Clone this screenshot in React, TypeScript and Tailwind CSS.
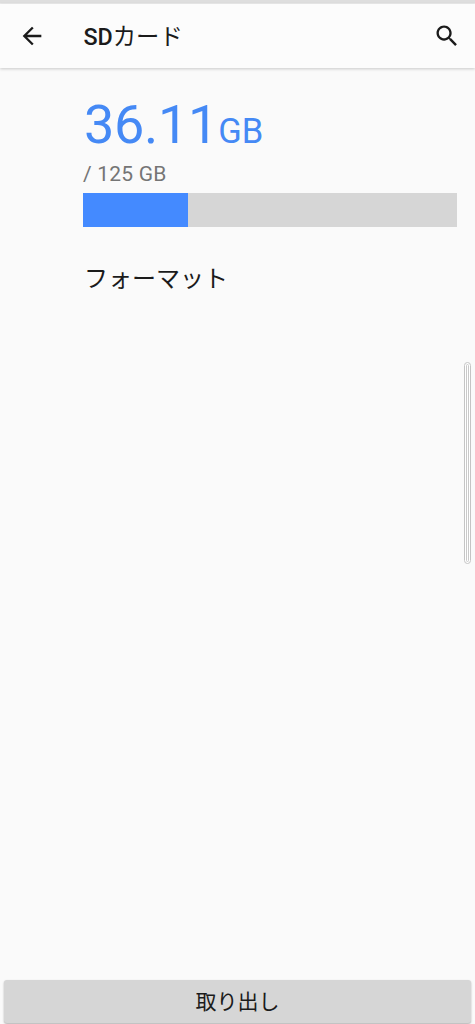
const USED_GB = 36.11;
const USED_PERCENT = 28.1;

function BackIcon() {
  return (
    <svg viewBox="0 0 24 24" className="size-[28px]" fill="currentColor" aria-hidden="true">
      <path d="M20 11H7.83l5.59-5.59L12 4l-8 8 8 8 1.41-1.41L7.83 13H20v-2z" />
    </svg>
  );
}

function SearchIcon() {
  return (
    <svg viewBox="0 0 24 24" className="size-[28px]" fill="currentColor" aria-hidden="true">
      <path d="M15.5 14h-.79l-.28-.27C15.41 12.59 16 11.11 16 9.5 16 5.91 13.09 3 9.5 3S3 5.91 3 9.5 5.91 16 9.5 16c1.61 0 3.09-.59 4.23-1.57l.27.28v.79l5 4.99L20.49 19l-4.99-5zm-6 0C7.01 14 5 11.99 5 9.5S7.01 5 9.5 5 14 7.01 14 9.5 11.99 14 9.5 14z" />
    </svg>
  );
}

export default function App() {
  return (
    <div className="relative flex h-[1024px] w-[475px] flex-col overflow-hidden bg-[#fafafa] font-['Roboto','Noto_Sans_CJK_JP',sans-serif] text-[#1b1b1b]">
      <div className="h-[4px] shrink-0 border-b border-[#ececec] bg-[#dedede]" />
      <header className="flex h-[64px] shrink-0 items-center bg-[#fcfcfc] pl-[18px] pr-[14px] shadow-[0_1px_3px_rgba(0,0,0,0.2)]">
        <button className="flex" aria-label="戻る">
          <BackIcon />
        </button>
        <h1 className="ml-[37.5px] flex-1 pt-[2px] text-[23.3px] leading-[30px] font-medium">
          SD<span className="font-normal">カード</span>
        </h1>
        <button className="flex" aria-label="検索">
          <SearchIcon />
        </button>
      </header>

      <main className="flex flex-1 flex-col pl-[83px] pr-[18px] pt-[30px]">
        <div className="flex h-[54px] items-baseline text-[#4589f5]">
          <span className="pl-px text-[54px] leading-[54px] tracking-[-0.3px]">{USED_GB}</span>
          <span className="text-[34.5px] leading-[54px]">GB</span>
        </div>
        <div className="mt-[9px] h-[26px] text-[21px] leading-[26px] tracking-[0.2px] text-[#757575]">/ 125 GB</div>
        <div className="mt-[6px] h-[34px] bg-[#d6d6d6]">
          <div className="h-full bg-[#448aff]" style={{ width: `${USED_PERCENT}%` }} />
        </div>
        <button className="mt-[34px] self-start pl-px text-[24px] leading-[36px]">フォーマット</button>
      </main>

      <div className="absolute left-[464px] top-[362px] h-[202px] w-[7px] rounded-full border border-[#c4c4c4] bg-white px-px py-px">
        <div className="h-full rounded-full border border-[#c9c9c9] bg-white" />
      </div>

      <footer className="flex h-[44px] shrink-0 pb-px pl-[4px] pr-[4px]">
        <button className="flex flex-1 items-center justify-center rounded-[3px] bg-[#d6d6d6] text-[21px] leading-[30px] shadow-[0_1px_2px_rgba(0,0,0,0.3)]">
          取り出し
        </button>
      </footer>
    </div>
  );
}
